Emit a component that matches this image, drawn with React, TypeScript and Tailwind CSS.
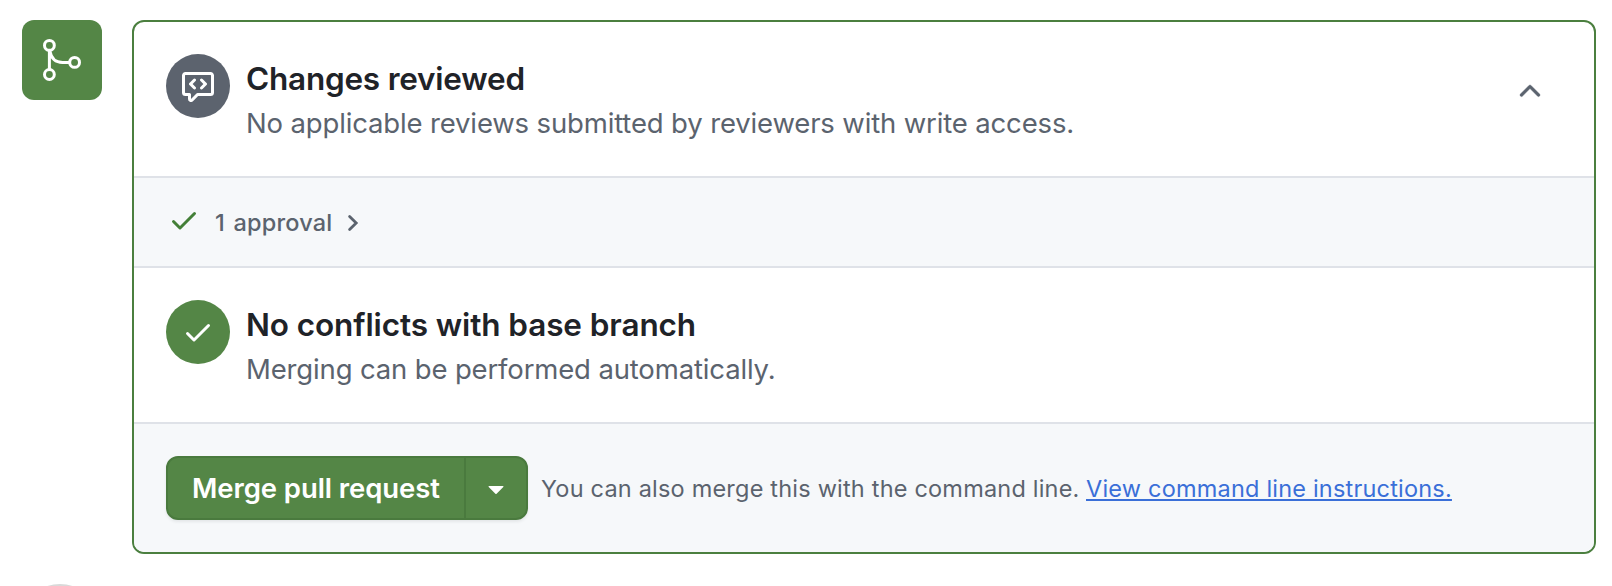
import type { ReactNode } from "react";

function GitMergeIcon() {
  return (
    <svg width="40" height="44" viewBox="42 38 40 44" fill="none" stroke="white" strokeWidth="3">
      <circle cx="49.4" cy="45.4" r="4.9" />
      <circle cx="49.4" cy="74.5" r="4.9" />
      <circle cx="74.6" cy="62.4" r="4.9" />
      <path d="M49.4 50.4V69.5M50 51.5C51.2 58 55.5 62.4 62.5 62.4H69.6" />
    </svg>
  );
}

function CodeReviewIcon() {
  return (
    <svg width="32" height="32" viewBox="0 0 16 16" fill="white">
      <path d="M1.75 1h12.5c.966 0 1.75.784 1.75 1.75v8.5A1.75 1.75 0 0 1 14.25 13H8.061l-2.574 2.573A1.458 1.458 0 0 1 3 14.543V13H1.75A1.75 1.75 0 0 1 0 11.25v-8.5C0 1.784.784 1 1.75 1ZM1.5 2.75v8.5c0 .138.112.25.25.25h2a.75.75 0 0 1 .75.75v2.189l2.72-2.719a.749.749 0 0 1 .53-.22h6.5a.25.25 0 0 0 .25-.25v-8.5a.25.25 0 0 0-.25-.25H1.75a.25.25 0 0 0-.25.25Zm5.28 1.72a.75.75 0 0 1 0 1.06L5.31 7l1.47 1.47a.751.751 0 0 1-.018 1.042.751.751 0 0 1-1.042.018l-2-2a.75.75 0 0 1 0-1.06l2-2a.75.75 0 0 1 1.06 0Zm2.44 0a.75.75 0 0 1 1.06 0l2 2a.75.75 0 0 1 0 1.06l-2 2a.751.751 0 0 1-1.042-.018.751.751 0 0 1-.018-1.042L10.69 7 9.22 5.53a.75.75 0 0 1 0-1.06Z" />
    </svg>
  );
}

function CheckIcon() {
  return (
    <svg width="32" height="32" viewBox="0 0 16 16" fill="currentColor">
      <path d="M13.78 4.22a.75.75 0 0 1 0 1.06l-7.25 7.25a.75.75 0 0 1-1.06 0L2.22 9.28a.751.751 0 0 1 .018-1.042.751.751 0 0 1 1.042-.018L6 10.94l6.72-6.72a.75.75 0 0 1 1.06 0Z" />
    </svg>
  );
}

function ChevronUpIcon() {
  return (
    <svg width="32" height="32" viewBox="0 0 16 16" fill="currentColor" stroke="currentColor" strokeWidth="0.2">
      <path d="M3.22 10.53a.749.749 0 0 1 0-1.06l4.25-4.25a.749.749 0 0 1 1.06 0l4.25 4.25a.749.749 0 1 1-1.06 1.06L8 6.811 4.28 10.53a.749.749 0 0 1-1.06 0Z" />
    </svg>
  );
}

function ChevronRightIcon() {
  return (
    <svg width="12" height="18" viewBox="0 0 12 18" fill="none" stroke="currentColor" strokeWidth="2.8" strokeLinecap="round">
      <path d="M2.6 2.400 9.200 9l-6.600 6.600" />
    </svg>
  );
}

function StatusRow({ icon, tone, title, detail, action }: {
  icon: ReactNode;
  tone: string;
  title: ReactNode;
  detail: ReactNode;
  action?: ReactNode;
}) {
  return (
    <section className="flex h-[156px] items-start border-b-2 border-[#dfe2e8] px-8 pt-8">
      <div className={`flex size-16 shrink-0 items-center justify-center rounded-full text-white ${tone}`}>{icon}</div>
      <div className="ml-4 mt-px flex-1 whitespace-nowrap">
        {title}
        {detail}
      </div>
      {action}
    </section>
  );
}

const titleStyle = "h-12 text-[31.5px] font-semibold leading-[48px] text-[#1f2328]";
const detailStyle = "-mt-px h-10 text-[27.5px] leading-[42px] text-[#5b636e]";

export default function App() {
  return (
    <main className="flex h-[586px] w-[1612px] overflow-hidden bg-white font-['Inter',sans-serif]">
      <aside className="flex w-[132px] shrink-0 flex-col pl-[22px] pt-5">
        <div className="flex size-20 shrink-0 items-center justify-center rounded-xl bg-[#548646]">
          <GitMergeIcon />
        </div>
        <div className="mt-[484px] h-0.5 overflow-visible">
          <div className="size-[76px] rounded-full border-2 border-[#d9d9d9] bg-[#e4e4e4]" />
        </div>
      </aside>

      <div className="mt-5 h-[534px] w-[1464px] overflow-hidden rounded-xl border-2 border-[#4b7f3f] bg-white">
        <StatusRow
          tone="bg-[#5c636e]"
          icon={<CodeReviewIcon />}
          title={<h3 className={titleStyle}><span className="tracking-[-0.22px]">Changes reviewed</span></h3>}
          detail={<p className={detailStyle}><span className="tracking-[-0.15px]">No applicable reviews submitted by reviewers with write access.</span></p>}
          action={<button className="mr-4 mt-[21px] text-[#5b636e]" aria-label="Collapse"><ChevronUpIcon /></button>}
        />

        <section className="flex h-[90px] items-center border-b-2 border-[#dfe2e8] bg-[#f6f8fa] pl-[34px] text-[#5b636e]">
          <span className="-mt-1 text-[#437f37]"><CheckIcon /></span>
          <button className="ml-[15px] mt-0.5 flex items-center whitespace-nowrap text-[23.5px] font-medium leading-9">
            <span className="w-[132px] text-left tracking-[0.2px] [word-spacing:2px]">1 approval</span>
            <span className="-mt-px"><ChevronRightIcon /></span>
          </button>
        </section>

        <StatusRow
          tone="bg-[#548646]"
          icon={<CheckIcon />}
          title={<h3 className={titleStyle}><span className="tracking-[-0.1px]">No conflicts with base branch</span></h3>}
          detail={<p className={detailStyle}><span className="tracking-[-0.15px]">Merging can be performed automatically.</span></p>}
        />

        <section className="flex h-32 items-center bg-[#f6f8fa] px-8 text-[23.5px] text-[#5b636e]">
          <div className="flex h-16 w-[362px] shrink-0 overflow-hidden rounded-xl border-2 border-[#4a7a3e] bg-[#548646] text-white shadow-[0_2px_3px_rgba(31,35,40,0.08)]">
            <button className="flex w-[298px] items-center whitespace-nowrap border-r-2 border-[#4a7a3e] pl-6 pt-0.5 text-[27.5px] font-semibold">
              <span className="tracking-[-0.08px]">Merge pull request</span>
            </button>
            <button className="flex flex-1 items-center justify-center" aria-label="Select merge method">
              <svg width="16" height="9" viewBox="0 0 16 9" className="mt-[4px]" fill="white">
                <path d="M1 0H15Q16 .3 15.300 1L8.600 7.700Q8 8.300 7.400 7.700L.7 1Q0 .3 1 0Z" />
              </svg>
            </button>
          </div>
          <p className="ml-[13px] mt-0.5 flex whitespace-nowrap">
            <span className="w-[545px] tracking-[0.2px]">You can also merge this with the command line.</span>
            <a href="#" className="tracking-[0.2px] text-[#3a6fd8] underline decoration-2 underline-offset-2 [text-decoration-skip-ink:none]">View command line instructions.</a>
          </p>
        </section>
      </div>
    </main>
  );
}
